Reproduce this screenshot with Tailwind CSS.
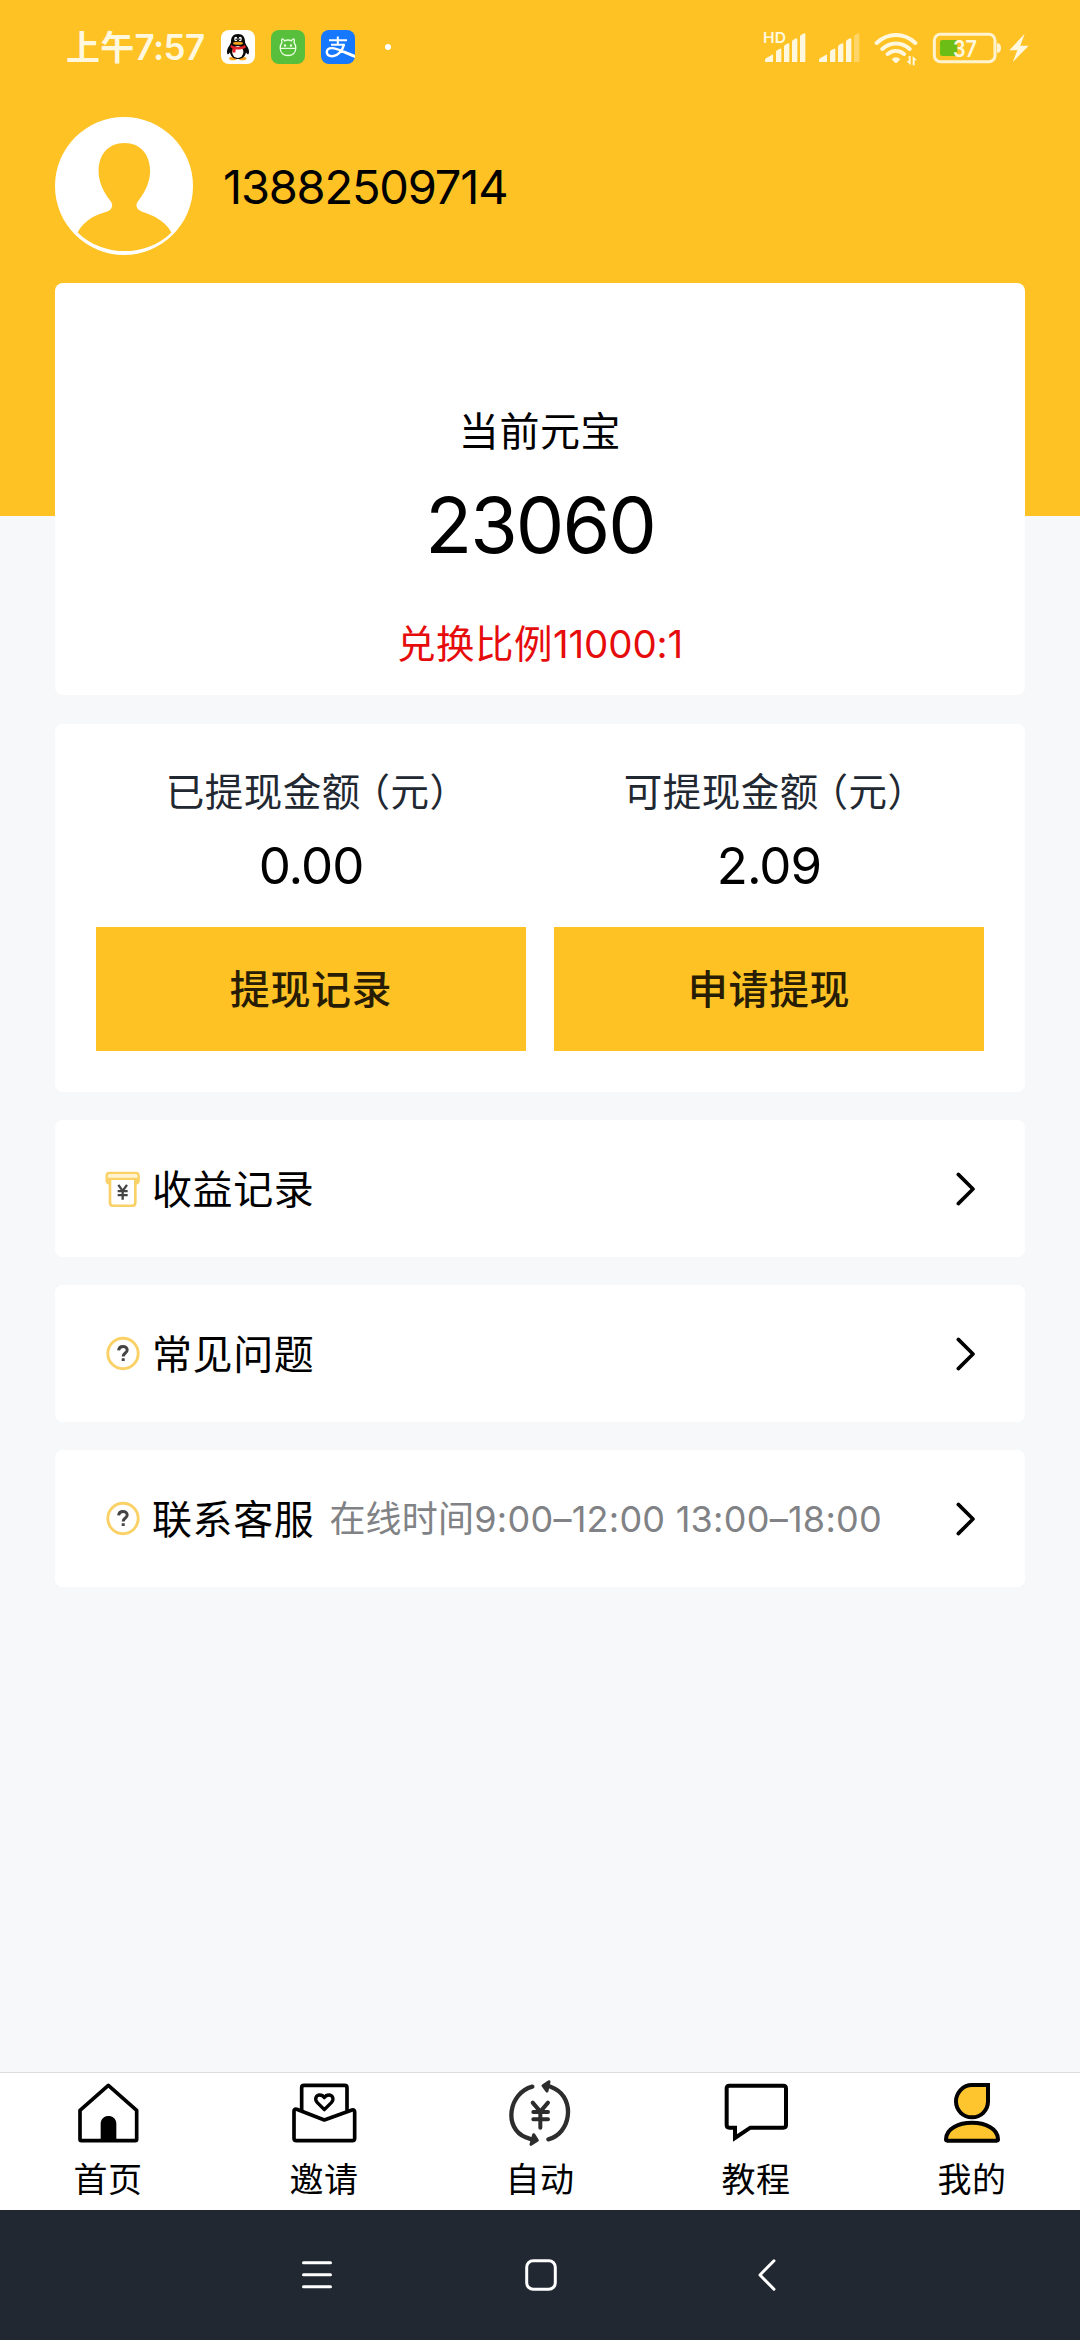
<!DOCTYPE html>
<html lang="zh-CN">
<head>
<meta charset="utf-8">
<title>我的</title>
<script src="https://cdn.jsdelivr.net/npm/@tailwindcss/browser@4"></script>
</head>
<body class="w-[1080px] h-[2340px] overflow-hidden bg-[#f7f8fa] text-black font-['Inter','Noto_Sans_CJK_SC',sans-serif] flex flex-col whitespace-nowrap">

<header class="h-[516px] shrink-0 bg-[#fec225]">
  <!-- status bar -->
  <div class="h-[117px] pt-[30px] pl-[66px] pr-[50px] flex items-start text-[#fff8df]">
    <div class="w-[155px] h-[35px] leading-[35px] text-[34px] font-bold tracking-[0.2px]">上午<span class="text-[35px] tracking-[-0.5px] font-semibold">7:57</span></div>
    <svg class="w-[34px] h-[34px]" viewBox="0 0 34 34">
      <rect width="34" height="34" rx="8" fill="#fff"/>
      <ellipse cx="12" cy="28.5" rx="4" ry="1.8" fill="#f6a51c"/><ellipse cx="21.500" cy="28.500" rx="4" ry="1.800" fill="#f6a51c"/>
      <path d="M17 4c-5 0-7 3.500-7 7.500 0 3-4 6-4 10 0 2 .5 2.800 1 2.800s1.300-1 2-1.800C10 27 13 29 17 29s7-2 8-6.500c.7.800 1.500 1.800 2 1.800s1-.8 1-2.800c0-4-4-7-4-10C24 7.500 22 4 17 4z" fill="#090909"/>
      <ellipse cx="16.800" cy="22" rx="5.600" ry="6" fill="#fff"/>
      <path d="M10 15c4 2.500 10 2.500 14 0l.8 2.800c-3 1.600-7 2-10.300 1.600v3h-3v-3.800L9.300 17z" fill="#e5252a"/>
      <ellipse cx="14.800" cy="9" rx="1.600" ry="2.200" fill="#fff"/><ellipse cx="19.200" cy="9" rx="1.600" ry="2.200" fill="#fff"/>
      <circle cx="15.200" cy="9.300" r=".8"/><circle cx="18.800" cy="9.300" r=".8"/>
      <ellipse cx="17" cy="13.300" rx="5" ry="1.500" fill="#f6a51c"/>
    </svg>
    <svg class="ml-4 w-[34px] h-[34px]" viewBox="0 0 34 34" fill="none" stroke="#e9ffe0" stroke-width="1.300">
      <rect width="34" height="34" rx="8" fill="#57bf3c" stroke="none"/>
      <path d="M11 12.500c-.6-2-.4-3.700.3-3.700 1 0 1.700 1 2.200 2 2-.9 5-.9 7 0 .5-1 1.200-2 2.200-2 .7 0 .9 1.700.3 3.700 1.500 1.800 1.800 3.500 1.800 5.500 0 4.600-3 7.500-7.800 7.500S9.200 22.600 9.200 18c0-2 .3-3.700 1.800-5.500zM9.200 18.300h15.600"/>
      <circle cx="14" cy="15.500" r=".6"/><circle cx="20" cy="15.500" r=".6"/>
    </svg>
    <svg class="ml-4 w-[34px] h-[34px]" viewBox="0 0 34 34" fill="none" stroke="#fff">
      <rect width="34" height="34" rx="8" fill="#1677ff" stroke="none"/>
      <path d="M8 10.200h18M16.800 6.500v8M10 14.800h13.800" stroke-width="2"/>
      <path d="M23 14.600c-1.400 5.600-6 11.600-11.700 11.600-3.600 0-5.500-1.800-5.500-4.100 0-2.200 1.900-4 4.900-4 6 0 13.300 4.200 23 8" stroke-width="2.400"/>
      <path d="M20 20.500c4 1.700 9 3.600 14 4.400v3c-5-1.600-11-4.300-15.500-6.300z" fill="#fff" stroke="none"/>
    </svg>
    <span class="ml-[30px] mt-[14px] size-[6px] rounded-full bg-white"></span>
    <svg class="ml-auto w-[45px] h-[35px]" viewBox="66 60 135 105" fill="#fff8df">
      <text x="69" y="99" font-size="44" font-weight="600" textLength="69" lengthAdjust="spacingAndGlyphs" font-family="Inter">HD</text>
      <path d="M75 156v-6q0-3 3-5l21-12v23zM108 156v-30q0-3 3-5l9-5q4-1 4 3v37zM132 156v-46q0-3 3-5l9-5q4-1 4 3v53zM156 156v-61q0-3 3-5l9-5q4-1 4 3v68zM180 156v-76q0-3 3-5l9-5q4-1 4 3v83z"/>
    </svg>
    <svg class="ml-[11px] w-[42px] h-[35px]" viewBox="234 60 126 105" fill="#fff8df">
      <path d="M237 156v-6q0-3 3-5l21-12v23zM270 156v-30q0-3 3-5l9-5q4-1 4 3v37zM294 156v-46q0-3 3-5l9-5q4-1 4 3v53zM318 156v-61q0-3 3-5l9-5q4-1 4 3v68z"/>
      <path d="M342 156v-76q0-3 3-5l9-5q4-1 4 3v83z" opacity=".35"/>
    </svg>
    <svg class="ml-[14px] w-[44px] h-[37px]" viewBox="402 60 132 111" fill="none" stroke="#fff8df">
      <path d="M410 99c34-32 82-32 116 0M427 117c24-22 58-22 82 0M443 132c15-12 34-12 49 0" stroke-width="12" stroke-linecap="round"/>
      <path d="M455 148q13-12 26 0l-10 10q-3 2-6 0z" fill="#fff8df" stroke="none"/>
      <path d="M512 138v28l-13-13h7v-15zM518 166v-28l13 13h-7v15z" fill="#fff8df" stroke="none"/>
    </svg>
    <svg class="ml-[14px] w-[70px] h-[35px]" viewBox="576 60 210 105">
      <rect x="583" y="73" width="182" height="82" rx="18" fill="none" stroke="#fff3cf" stroke-width="9"/>
      <path d="M607 90h45v48h-45q-7 0-7-7V97q0-7 7-7z" fill="#6cbd15"/>
      <path d="M771 99q12 2 12 15t-12 15z" fill="#fff3cf"/>
      <text x="639" y="140" font-size="67" font-weight="600" textLength="72" lengthAdjust="spacingAndGlyphs" fill="#fff8df" font-family="Inter">37</text>
    </svg>
    <svg class="ml-[6px] w-[22px] h-[35px]" viewBox="804 60 66 105" fill="#fff8df"><path d="M854 71l-46 50h24l-14 36 48-50h-25z"/></svg>
  </div>

  <!-- profile -->
  <div class="pl-[55px] flex items-center h-[138px]">
    <svg class="size-[138px]" viewBox="45 50 415 415">
      <circle cx="252.500" cy="257.500" r="207.500" fill="#fff"/>
      <path d="M254 128c-50 0-78 36-78 84 0 32 14 63 33 87 8 10 10 16 6 24-3 8-13 12-27 16-35 11-60 31-75 58 78 75 206 75 282 0-14-25-41-46-77-58-13-4-23-8-26-15-4-9-2-15 6-25 19-24 33-55 33-87 0-48-28-84-77-84z" fill="#fec225"/>
    </svg>
    <span class="ml-[30px] mt-px text-[47px] leading-[60px] tracking-[-1.200px]">13882509714</span>
  </div>
</header>

<main class="px-[55px] -mt-[233px] grow">
  <section class="h-[412px] rounded-lg bg-white pt-[125px] text-center">
    <div class="text-[40px] leading-[48px] tracking-[0.6px]">当前元宝</div>
    <div class="mt-[24px] text-[77px] leading-[90px] tracking-[-2px]">23060</div>
    <div class="mt-[51px] text-[38.500px] leading-[46px] text-[#e60c0c] tracking-[0.5px]">兑换比例<span class="tracking-[-0.100px]">11000:1</span></div>
  </section>

  <section class="mt-[29px] h-[368px] rounded-lg bg-white px-[41px] pt-[44px] grid grid-cols-2 gap-x-7 text-center content-start">
    <div>
      <div class="pr-[7px] text-[38.500px] leading-[48px] text-[#222831] tracking-[0.5px]">已提现金额<span class="ml-[10px] [font-feature-settings:'halt']">（</span>元<span class="[font-feature-settings:'halt']">）</span></div>
      <div class="mt-[20px] text-[51px] leading-[60px] tracking-[-1px]">0.00</div>
      <button class="mt-[31px] block w-full h-[124px] pt-[2px] bg-[#fec225] text-[#271c04] text-[40px] font-medium tracking-[0.6px]">提现记录</button>
    </div>
    <div>
      <div class="pr-[7px] text-[38.500px] leading-[48px] text-[#222831] tracking-[0.5px]">可提现金额<span class="ml-[10px] [font-feature-settings:'halt']">（</span>元<span class="[font-feature-settings:'halt']">）</span></div>
      <div class="mt-[20px] text-[51px] leading-[60px] tracking-[-1px]">2.09</div>
      <button class="mt-[31px] block w-full h-[124px] pt-[2px] bg-[#fec225] text-[#271c04] text-[40px] font-medium tracking-[0.6px]">申请提现</button>
    </div>
  </section>

  <section class="mt-7 flex flex-col gap-7 text-[40px] tracking-[0.6px]">
    <a class="h-[137px] rounded-lg bg-white px-[50px] flex items-center">
      <svg class="size-9" viewBox="195 211.500 108 108" fill="none" stroke="#f9d166" stroke-width="8">
        <path d="M210 236v70q0 10 10 10h56q10 0 10-10v-70" />
        <path d="M207 249q-7-2-7-9v-14q0-9 9-9h78q9 0 9 9v14q0 7-7 9v-14h-82z" fill="#fff3d0" stroke-width="7"/>
        <path d="M235 253l13 18 13-18M248 271v27M233 272h30M233 284h30" stroke="#444" stroke-width="7"/>
      </svg>
      <span class="ml-[11px] mt-[2px]">收益记录</span>
      <svg class="ml-auto w-[19px] h-9" viewBox="0 0 19 36" fill="none" stroke="#000" stroke-width="3.600" stroke-linecap="round" stroke-linejoin="round"><path d="M2.300 3.400L17 18 2.300 32.600"/></svg>
    </a>
    <a class="h-[137px] rounded-lg bg-white px-[50px] flex items-center">
      <svg class="size-9" viewBox="0 0 36 36" fill="none"><circle cx="18" cy="17.500" r="15.200" stroke="#f9d166" stroke-width="2.900"/><path d="M13.600 14.300c.3-2.600 2-3.900 4.300-3.900 2.500 0 4.300 1.400 4.300 3.500 0 3.200-4 3-4 6.600M18.200 22.300v2.800" stroke="#444" stroke-width="3"/></svg>
      <span class="ml-[11px] mt-[2px]">常见问题</span>
      <svg class="ml-auto w-[19px] h-9" viewBox="0 0 19 36" fill="none" stroke="#000" stroke-width="3.600" stroke-linecap="round" stroke-linejoin="round"><path d="M2.300 3.400L17 18 2.300 32.600"/></svg>
    </a>
    <a class="h-[137px] rounded-lg bg-white px-[50px] flex items-center">
      <svg class="size-9" viewBox="0 0 36 36" fill="none"><circle cx="18" cy="17.500" r="15.200" stroke="#f9d166" stroke-width="2.900"/><path d="M13.600 14.300c.3-2.600 2-3.900 4.300-3.900 2.500 0 4.300 1.400 4.300 3.500 0 3.200-4 3-4 6.600M18.200 22.300v2.800" stroke="#444" stroke-width="3"/></svg>
      <span class="ml-[11px] mt-[2px]">联系客服</span>
      <span class="ml-[15px] mt-px text-[36px] tracking-[0.2px] text-[#808285]">在线时间<span class="tracking-[0.260px]">9:00–12:00 13:00–18:00</span></span>
      <svg class="ml-auto w-[19px] h-9" viewBox="0 0 19 36" fill="none" stroke="#000" stroke-width="3.600" stroke-linecap="round" stroke-linejoin="round"><path d="M2.300 3.400L17 18 2.300 32.600"/></svg>
    </a>
  </section>
</main>

<!-- tab bar -->
<nav class="h-[138px] shrink-0 border-t border-[#dcdddf] bg-white pt-[3px] grid grid-cols-5 text-center text-[34px] leading-[64px] tracking-[0.4px]">
  <a class="flex flex-col items-center">
    <svg class="size-[72px]" viewBox="216 48 216 216" fill="none" stroke="#000" stroke-width="11" stroke-linejoin="round"><path d="M325 76l85 75v87q0 4-4 4H244q-4 0-4-4v-87z"/><path d="M302 242v-50c0-32 47-32 47 0v50z" fill="#000" stroke="none"/></svg>
    首页
  </a>
  <a class="flex flex-col items-center">
    <svg class="size-[72px]" viewBox="864 48 216 216" fill="none" stroke="#000" stroke-width="11" stroke-linejoin="round"><path d="M905 152V83q0-7 7-7h122q7 0 7 7v69"/><path d="M882 154q0-8 8-6l83 32 83-30q8-2 8 6v79q0 7-7 7H889q-7 0-7-7z"/><path d="M973 149l-21-21c-10-11-3-23 7-23 7 0 11 3 14 8 3-5 7-8 14-8 10 0 17 12 7 23z" stroke-width="10"/></svg>
    邀请
  </a>
  <a class="flex flex-col items-center">
    <svg class="size-[72px]" viewBox="312 48 216 216" fill="none" stroke="#2d2d2d" stroke-width="13" stroke-linecap="round" stroke-linejoin="round"><path d="M397 80C325 99 310 205 377 232c10 4 18 7 27 8M445 238c67-17 82-119 19-152-10-5-17-8-25-9"/><path d="M447 65l-18 12 12 16zM401 224l11 17-19 12z" stroke-width="9" fill="#2d2d2d"/><path d="M398 128l23 27 23-27M421 155v48M400 156h44M400 178h44" stroke-width="12"/></svg>
    自动
  </a>
  <a class="flex flex-col items-center">
    <svg class="size-[72px]" viewBox="960 48 216 216" fill="none" stroke="#000" stroke-width="12"><path d="M988 77h162q8 0 8 8v110q0 8-8 8h-99l-46 31v-31h-17q-8 0-8-8V85q0-8 8-8z"/></svg>
    教程
  </a>
  <a class="flex flex-col items-center">
    <svg class="size-[72px]" viewBox="588 48 216 216" fill="#fec52f" stroke="#000" stroke-width="12" stroke-linejoin="round"><path d="M696 75h48v49c0 28-22 48-48 48s-48-20-48-48c0-27 22-49 48-49z" stroke-linejoin="miter"/><path d="M618 238c0-66 156-66 156 0q0 4-4 4H622q-4 0-4-4z"/></svg>
    我的
  </a>
</nav>

<!-- system navigation -->
<footer class="h-[130px] shrink-0 bg-[#222831] pl-[302px] pr-[304px] flex items-center justify-between">
  <svg class="w-[30px] h-[28px]" viewBox="0 0 30 28" stroke="#fff" stroke-width="3" stroke-linecap="round"><path d="M1.500 1.700h27M1.500 13.700h27M1.500 25.700h27"/></svg>
  <svg class="-ml-[9px] size-[32px]" viewBox="0 0 32 32" fill="none" stroke="#fff" stroke-width="3"><rect x="1.700" y="1.700" width="28.600" height="28.600" rx="6.500"/></svg>
  <svg class="w-[18px] h-[32px]" viewBox="0 0 18 32" fill="none" stroke="#fff" stroke-width="3" stroke-linecap="round" stroke-linejoin="round"><path d="M16 1.800L2 16l14 14.200"/></svg>
</footer>
</body>
</html>
